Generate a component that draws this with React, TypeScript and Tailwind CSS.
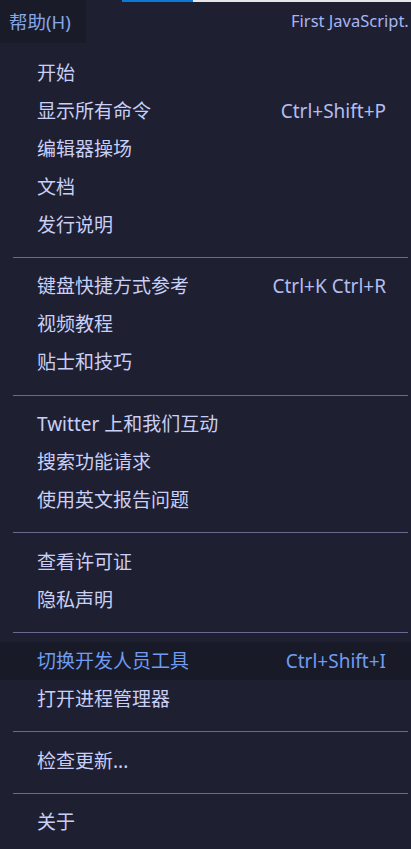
type Item = { label: string; shortcut?: string; active?: boolean }

const GROUPS: Item[][] = [
  [
    { label: '开始' },
    { label: '显示所有命令', shortcut: 'Ctrl+Shift+P' },
    { label: '编辑器操场' },
    { label: '文档' },
    { label: '发行说明' },
  ],
  [
    { label: '键盘快捷方式参考', shortcut: 'Ctrl+K Ctrl+R' },
    { label: '视频教程' },
    { label: '贴士和技巧' },
  ],
  [
    { label: 'Twitter 上和我们互动' },
    { label: '搜索功能请求' },
    { label: '使用英文报告问题' },
  ],
  [{ label: '查看许可证' }, { label: '隐私声明' }],
  [{ label: '切换开发人员工具', shortcut: 'Ctrl+Shift+I', active: true }, { label: '打开进程管理器' }],
  [{ label: '检查更新...' }],
  [{ label: '关于' }],
]

function MenuRow({ item }: { item: Item }) {
  return (
    <div
      className={`h-[38px] flex items-center justify-between pl-[37px] pr-[25px] ${
        item.active ? 'bg-[#181a27] text-[#6f9cf2]' : 'text-[#c9cff6]'
      }`}
    >
      <span>{item.label}</span>
      {item.shortcut && (
        <span className={item.active ? 'text-[#6f9cf2]' : 'text-[#b4bdf0]'}>{item.shortcut}</span>
      )}
    </div>
  )
}

export default function App() {
  return (
    <div
      className="w-[411px] h-[849px] bg-[#1e2031] overflow-hidden text-[19px]"
      style={{ fontFamily: '"Noto Sans", "Noto Sans CJK SC", sans-serif' }}
    >
      {/* top bar */}
      <div className="relative h-[43px] flex items-stretch">
        <div className="absolute top-0 left-[122px] w-[71px] h-[2px] bg-[#0a78d6]" />
        <div className="absolute top-0 left-[193px] right-0 h-[2px] bg-[#e6e6e6]" />
        <div className="w-[86px] bg-[#191b29] flex items-center pl-[9px] text-[#86a6ea] text-[18.5px]">
          帮助(H)
        </div>
        <div className="flex-1 flex items-center overflow-hidden whitespace-nowrap text-[#a9b5f2] text-[16.5px] pl-[205px]">
          <span>First JavaScript.</span>
        </div>
      </div>

      {/* menu */}
      <div className="pt-[11px]">
        {GROUPS.map((group, gi) => (
          <div key={gi}>
            {gi > 0 && <div className="mt-[13px] mb-[9.6px] ml-[13px] mr-[3px] h-px bg-[#676b92]" />}
            {group.map(item => (
              <MenuRow key={item.label} item={item} />
            ))}
          </div>
        ))}
      </div>
    </div>
  )
}
